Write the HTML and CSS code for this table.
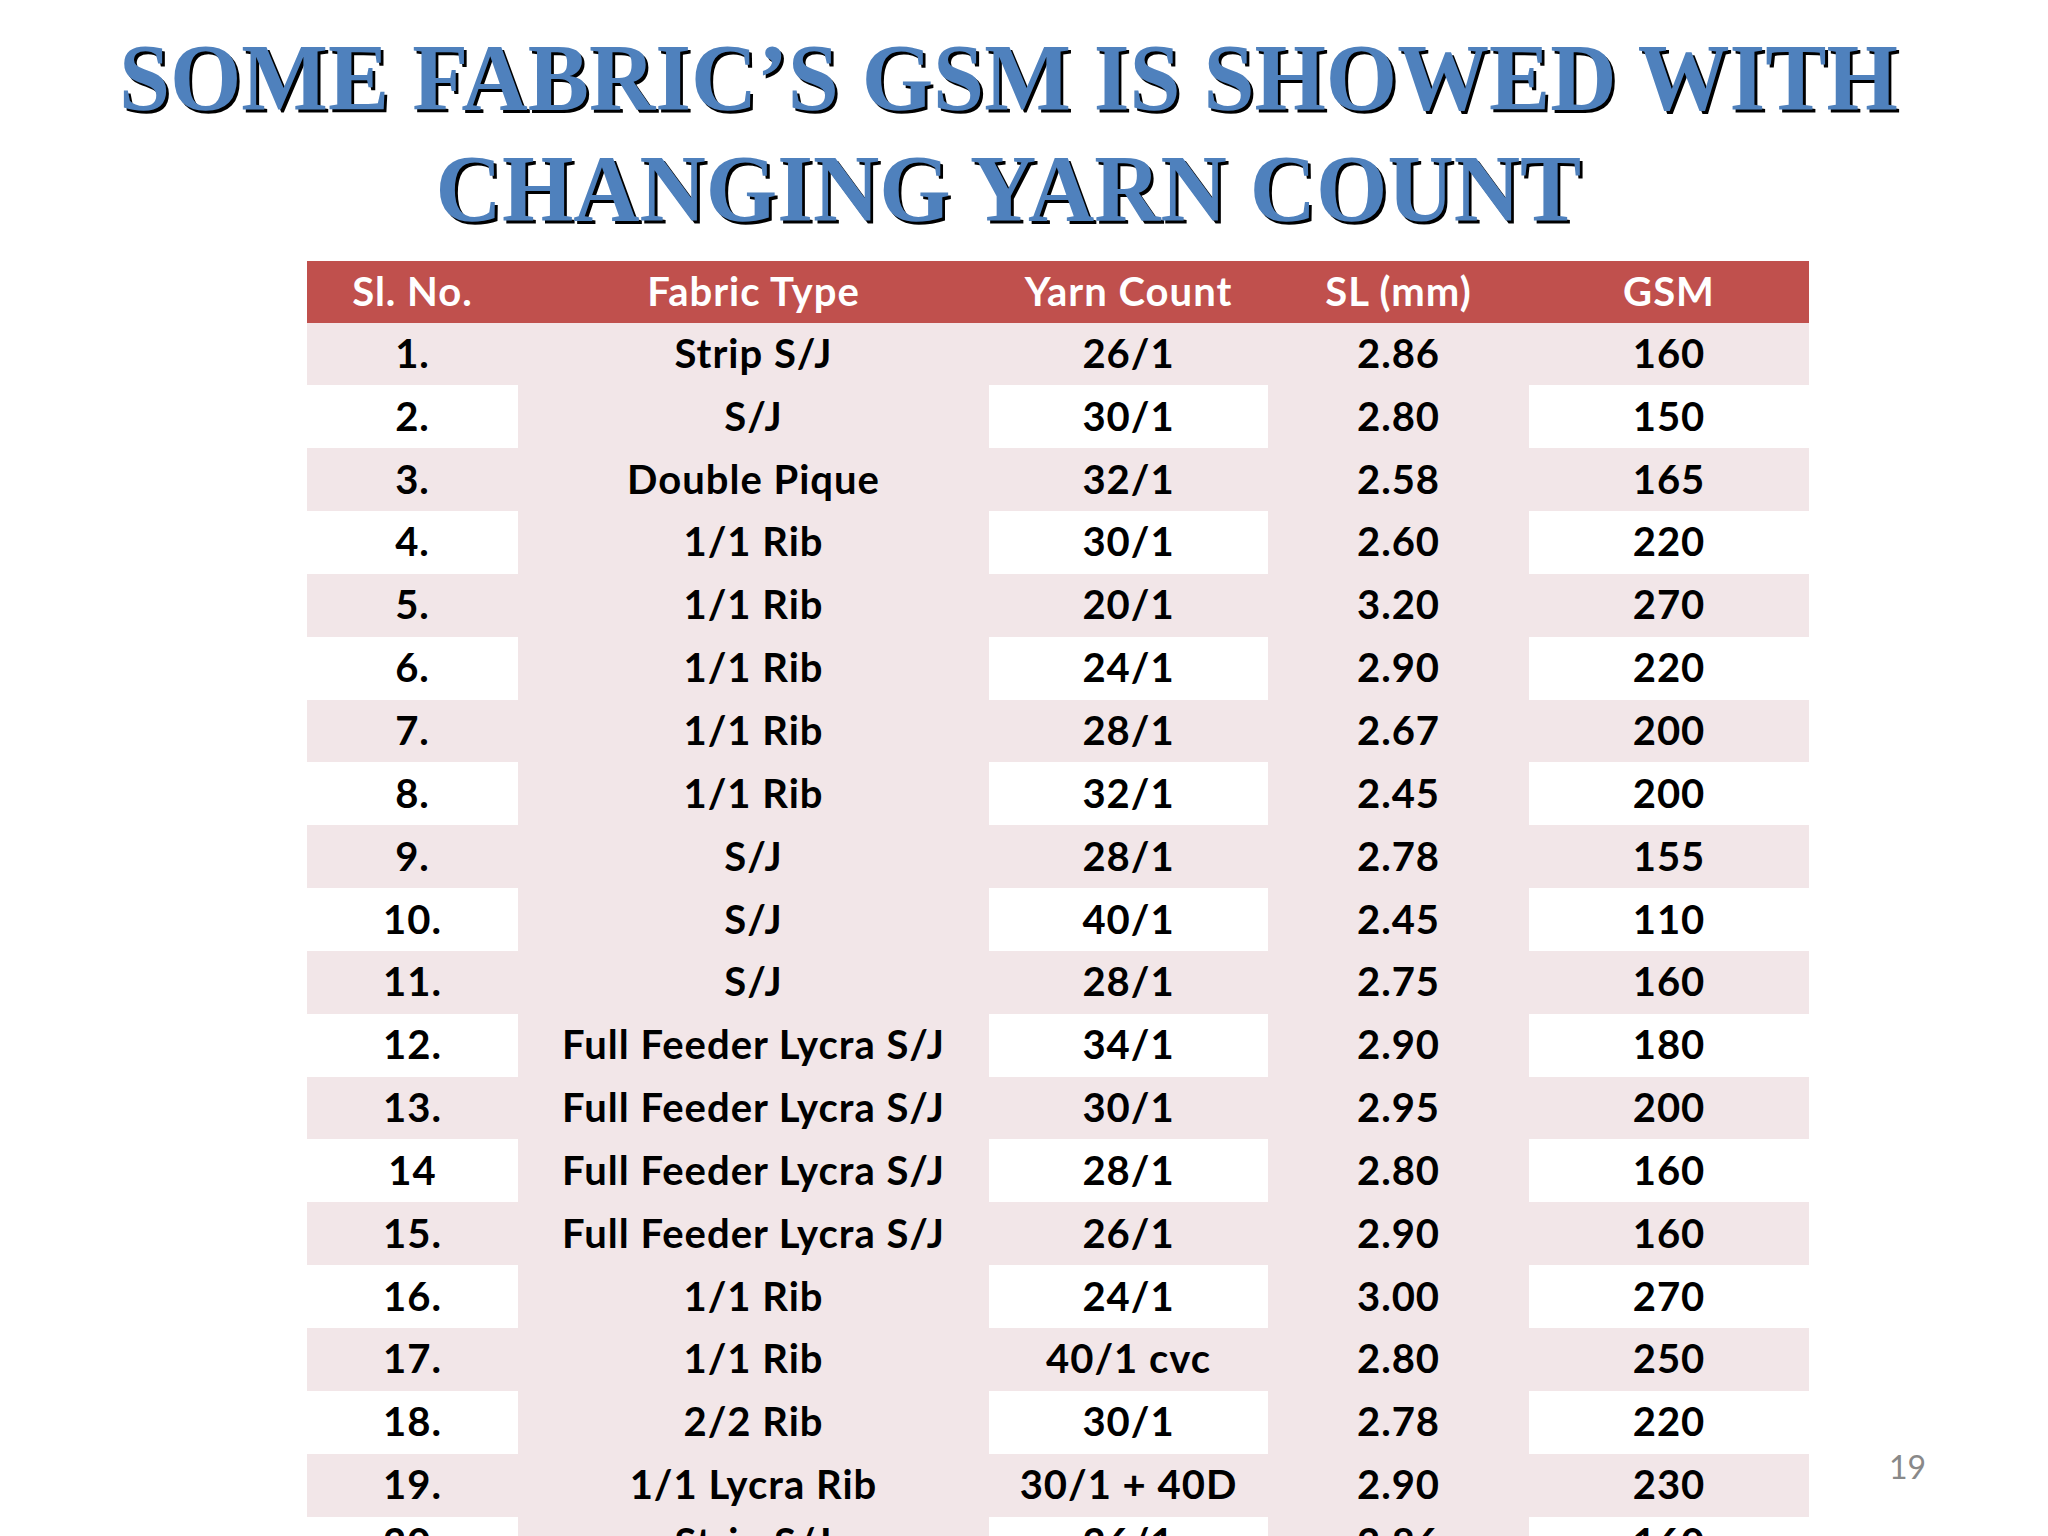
FILE: index.html
```html
<!DOCTYPE html>
<html lang="en">
<head>
<meta charset="utf-8">
<title>Some Fabric's GSM</title>
<link rel="stylesheet" href="styles.css">
</head>
<body>
<div class="slide">
  <h1 class="title"><span class="title-text">SOME FABRIC’S GSM IS SHOWED WITH<br>CHANGING YARN COUNT</span></h1>
  <table class="gsm">
    <colgroup>
      <col class="c1"><col class="c2"><col class="c3"><col class="c4"><col class="c5">
    </colgroup>
    <thead>
      <tr><th>Sl. No.</th><th>Fabric Type</th><th>Yarn Count</th><th>SL (mm)</th><th>GSM</th></tr>
    </thead>
    <tbody>
      <tr><td>1.</td><td>Strip S/J</td><td>26/1</td><td>2.86</td><td>160</td></tr>
      <tr><td>2.</td><td>S/J</td><td>30/1</td><td>2.80</td><td>150</td></tr>
      <tr><td>3.</td><td>Double Pique</td><td>32/1</td><td>2.58</td><td>165</td></tr>
      <tr><td>4.</td><td>1/1 Rib</td><td>30/1</td><td>2.60</td><td>220</td></tr>
      <tr><td>5.</td><td>1/1 Rib</td><td>20/1</td><td>3.20</td><td>270</td></tr>
      <tr><td>6.</td><td>1/1 Rib</td><td>24/1</td><td>2.90</td><td>220</td></tr>
      <tr><td>7.</td><td>1/1 Rib</td><td>28/1</td><td>2.67</td><td>200</td></tr>
      <tr><td>8.</td><td>1/1 Rib</td><td>32/1</td><td>2.45</td><td>200</td></tr>
      <tr><td>9.</td><td>S/J</td><td>28/1</td><td>2.78</td><td>155</td></tr>
      <tr><td>10.</td><td>S/J</td><td>40/1</td><td>2.45</td><td>110</td></tr>
      <tr><td>11.</td><td>S/J</td><td>28/1</td><td>2.75</td><td>160</td></tr>
      <tr><td>12.</td><td>Full Feeder Lycra S/J</td><td>34/1</td><td>2.90</td><td>180</td></tr>
      <tr><td>13.</td><td>Full Feeder Lycra S/J</td><td>30/1</td><td>2.95</td><td>200</td></tr>
      <tr><td>14</td><td>Full Feeder Lycra S/J</td><td>28/1</td><td>2.80</td><td>160</td></tr>
      <tr><td>15.</td><td>Full Feeder Lycra S/J</td><td>26/1</td><td>2.90</td><td>160</td></tr>
      <tr><td>16.</td><td>1/1 Rib</td><td>24/1</td><td>3.00</td><td>270</td></tr>
      <tr><td>17.</td><td>1/1 Rib</td><td>40/1 cvc</td><td>2.80</td><td>250</td></tr>
      <tr><td>18.</td><td>2/2 Rib</td><td>30/1</td><td>2.78</td><td>220</td></tr>
      <tr><td>19.</td><td>1/1 Lycra Rib</td><td>30/1 + 40D</td><td>2.90</td><td>230</td></tr>
      <tr class="cut"><td>20.</td><td>Strip S/J</td><td>26/1</td><td>2.86</td><td>160</td></tr>
    </tbody>
  </table>
  <div class="slide-num">19</div>
</div>
</body>
</html>
```

FILE: styles.css
```css
html, body {
  margin: 0;
  padding: 0;
  background: #ffffff;
}

.slide {
  position: relative;
  width: 2048px;
  height: 1536px;
  overflow: hidden;
  background: #ffffff;
}

.title {
  margin: 0;
  padding-top: 22px;
  width: 2016px;
  text-align: center;
  font-family: "Liberation Serif", "Times New Roman", serif;
  font-weight: bold;
  font-size: 96px;
  line-height: 111px;
  color: #4f81bd;
  text-shadow: 3px 3px 0 #000000;
}

.title-text {
  display: inline-block;
  transform: scaleX(0.956);
  transform-origin: 50% 50%;
}

.gsm {
  margin: 17px 0 0 307px;
  border-collapse: collapse;
  table-layout: fixed;
  width: 1502px;
  font-family: Lato, "Open Sans", sans-serif;
  font-weight: bold;
  font-size: 40px;
  letter-spacing: 1px;
}

.c1 { width: 211px; }
.c2 { width: 471px; }
.c3 { width: 279px; }
.c4 { width: 261px; }
.c5 { width: 280px; }

.gsm th,
.gsm td {
  padding: 0 0 2px 0;
  text-align: center;
  vertical-align: middle;
  white-space: nowrap;
}

.gsm thead tr {
  height: 61.5px;
  background: #c0504d;
}

.gsm th {
  color: #ffffff;
  font-weight: bold;
}

.gsm tbody tr {
  height: 62.85px;
}

.gsm td {
  color: #000000;
  background: #ffffff;
}

.gsm tbody tr:nth-child(odd) td,
.gsm tbody tr:nth-child(even) td:nth-child(2),
.gsm tbody tr:nth-child(even) td:nth-child(4) {
  background: #f2e6e8;
}

.gsm tbody tr.cut td {
  vertical-align: top;
  padding-top: 5px;
  line-height: 1;
}

.slide-num {
  position: absolute;
  left: 1889px;
  top: 1447px;
  font-family: Lato, "Open Sans", sans-serif;
  font-size: 32px;
  color: #898989;
}
```
